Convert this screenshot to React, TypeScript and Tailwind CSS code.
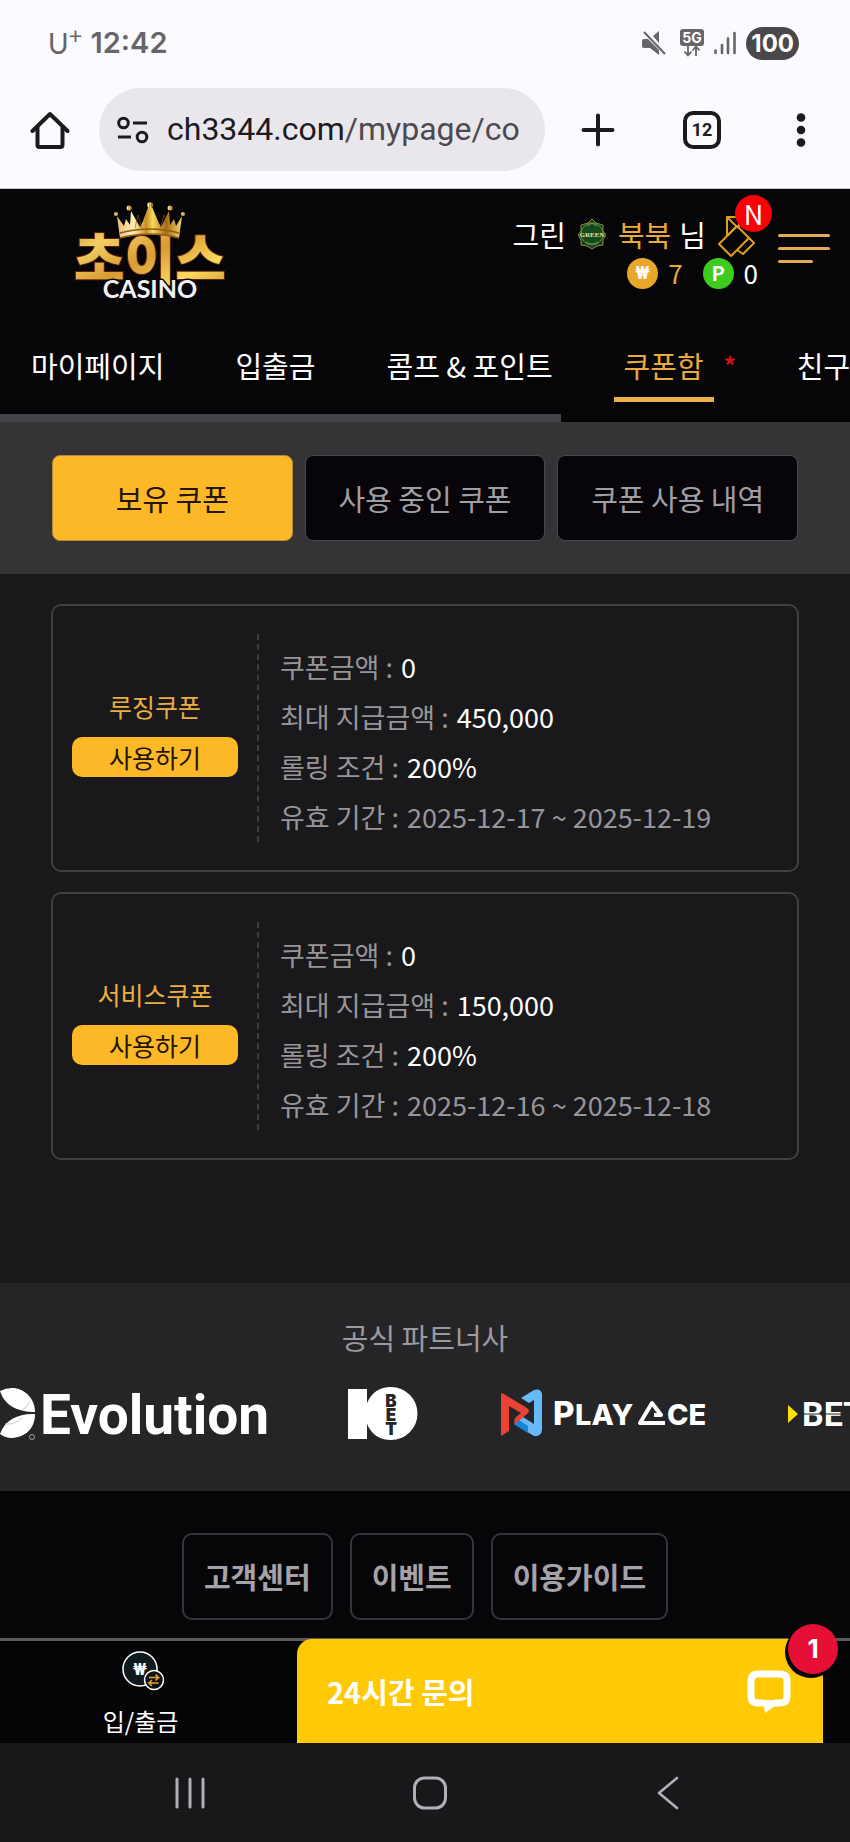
import type { ReactNode } from "react";

type Coupon = {
  name: string;
  amount: string;
  max: string;
  rolling: string;
  period: string;
};

const coupons: Coupon[] = [
  { name: "루징쿠폰", amount: "0", max: "450,000", rolling: "200%", period: "2025-12-17 ~ 2025-12-19" },
  { name: "서비스쿠폰", amount: "0", max: "150,000", rolling: "200%", period: "2025-12-16 ~ 2025-12-18" },
];

const menu = [
  { label: "마이페이지" },
  { label: "입출금" },
  { label: "콤프 & 포인트" },
  { label: "쿠폰함", active: true },
  { label: "친구초대" },
];

const tabs = ["보유 쿠폰", "사용 중인 쿠폰", "쿠폰 사용 내역"];

const footerLinks = ["고객센터", "이벤트", "이용가이드"];

function StatusBar() {
  return (
    <div className="flex h-[86px] items-center justify-between pl-12 pr-[51px] font-['Inter',sans-serif] text-[#676569]">
      <div className="flex items-center gap-2">
        <span className="flex items-start font-['Lato',sans-serif] text-[28px] leading-8">
          U<span className="text-[24px] leading-4">+</span>
        </span>
        <span className="text-[29px] font-semibold leading-8">12:42</span>
      </div>
      <div className="flex items-center gap-2.5">
        <svg className="h-6 w-6" viewBox="0 0 24 24" fill="currentColor">
          <path d="M0 10q0-2 2-2h4l11 11v5l-9-7H2q-2 0-2-2zM11 5l6-5v12z" />
          <path d="M2 1l21 22" stroke="currentColor" strokeWidth="2" />
        </svg>
        <svg className="ml-1 h-7 w-6" viewBox="0 0 24 28">
          <rect width="24" height="17" rx="3" fill="#676569" />
          <text x="12" y="14" textAnchor="middle" fontFamily="Inter" fontSize="14" fontWeight="700" fill="#fff">5G</text>
          <path d="M8 17v9M4.500 22.500l3.500 4 3.500-4M16 27v-9M12.500 21.500l3.500-4 3.500 4" stroke="#676569" strokeWidth="1.800" fill="none" />
        </svg>
        <svg className="h-6 w-[22px]" viewBox="0 0 22 24" stroke="currentColor" strokeWidth="2.600" strokeLinecap="round">
          <path d="M1.500 19.500v2.500M8 14v8M14 7.500v14.500M20.500 2v20" />
        </svg>
        <span className="rounded-full bg-[#4a484b] px-[5px] text-[24px] font-bold leading-[33px] text-white">100</span>
      </div>
    </div>
  );
}

function BrowserToolbar() {
  return (
    <div className="flex items-center gap-[29px] border-b border-[#c9c8cc] pb-[17px] pl-[30px] pr-[34px] pt-0.5 text-[#1c1a1f]">
      <button aria-label="홈">
        <svg className="h-10 w-10" viewBox="0 0 40 40" fill="none" stroke="currentColor" strokeWidth="4" strokeLinejoin="round">
          <path d="M2.500 21L20 4l17.500 17" strokeLinecap="round" />
          <path d="M7.500 17v18q0 2 2 2h21q2 0 2-2V17" />
        </svg>
      </button>
      <button className="flex min-w-0 flex-1 items-center gap-[18px] rounded-full bg-[#e9e7ec] pl-[18px] font-['Roboto',sans-serif] text-[32px] leading-[83px]">
        <svg className="h-8 w-8 shrink-0" viewBox="0 0 32 32" fill="none" stroke="currentColor" strokeWidth="3">
          <circle cx="6.500" cy="9" r="4.800" />
          <path d="M16 9h14M1 23h13" />
          <circle cx="25" cy="23" r="4.800" />
        </svg>
        <span className="overflow-hidden whitespace-nowrap">
          ch3344.com<span className="text-[#4c4a50]">/mypage/co</span>
        </span>
      </button>
      <div className="ml-1 flex items-center gap-[65px]">
        <button aria-label="새 탭">
          <svg className="h-10 w-10" viewBox="0 0 40 40" stroke="currentColor" strokeWidth="4" strokeLinecap="round">
            <path d="M20 5.500v29M5.500 20h29" />
          </svg>
        </button>
        <button className="flex h-[38px] w-[38px] items-center justify-center rounded-[10px] border-4 border-current font-['Roboto',sans-serif] text-[18px] font-bold">
          12
        </button>
        <button aria-label="메뉴">
          <svg className="h-10 w-[30px]" viewBox="0 0 30 40" fill="currentColor">
            <circle cx="15" cy="7.500" r="4.300" />
            <circle cx="15" cy="20" r="4.300" />
            <circle cx="15" cy="32.500" r="4.300" />
          </svg>
        </button>
      </div>
    </div>
  );
}

function SiteLogo() {
  return (
    <svg className="h-[110px] w-[160px]" viewBox="0 0 160 110" role="img" aria-label="초이스 CASINO">
      <defs>
        <linearGradient id="gold" x1="0" y1="0" x2="1" y2="1">
          <stop offset="0" stopColor="#b97f22" />
          <stop offset="0.250" stopColor="#f3cf63" />
          <stop offset="0.500" stopColor="#d99b32" />
          <stop offset="0.750" stopColor="#fbd95e" />
          <stop offset="1" stopColor="#c98b28" />
        </linearGradient>
        <linearGradient id="crown" x1="0" y1="0" x2="1" y2="0">
          <stop offset="0" stopColor="#e9b978" />
          <stop offset="0.250" stopColor="#fff0b0" />
          <stop offset="0.450" stopColor="#c98e1e" />
          <stop offset="0.550" stopColor="#f8d95c" />
          <stop offset="0.750" stopColor="#a86d12" />
          <stop offset="1" stopColor="#f4d56a" />
        </linearGradient>
      </defs>
      <text x="80" y="82" textAnchor="middle" fontFamily="Noto Sans CJK KR" fontSize="55" fontWeight="900" fill="url(#gold)" stroke="#5a2410" strokeWidth="2" paintOrder="stroke">초이스</text>
      <g fill="url(#crown)">
        <path d="M50 41l-3-22 7 10 2-7 4 6 1-14 9 16 3-6 7-19 8 19 3 6 8-16 1 14 4-6 2 7 6-10-3 22q-30-7-59 0z" />
        <circle cx="46" cy="17" r="2" />
        <circle cx="59" cy="11" r="2.500" />
        <circle cx="80" cy="8" r="2.800" />
        <circle cx="100" cy="11" r="2.500" />
        <circle cx="113" cy="17" r="2" />
      </g>
      <path d="M50 36q30-8 59 0M50 41q30-8 59 0" fill="none" stroke="#8e5a1c" strokeWidth="1.500" />
      <path d="M65 31l3-13 4 13M90 31l4-13 4 13" fill="none" stroke="#8e5a1c" strokeWidth="1" opacity="0.600" />
      <text x="80" y="101" textAnchor="middle" fontFamily="Lato" fontSize="25" fontWeight="700" fill="#f2f0f4" stroke="#08060a" strokeWidth="3" paintOrder="stroke">CASINO</text>
    </svg>
  );
}

function GreenEmblem() {
  return (
    <svg className="h-8 w-7" viewBox="0 0 28 32">
      <path d="M14 1l4 4 7 2v6l3 4-3 5v5l-6 1-5 3-5-3-6-1v-5l-3-5 3-4V7l7-2z" fill="#123d18" stroke="#8b8a45" strokeWidth="1" />
      <circle cx="14" cy="16" r="11" fill="#17491f" stroke="#66883f" strokeWidth="1" />
      <path d="M9 8l5-3 5 3M8 24q6 4 12 0" fill="none" stroke="#6d9a52" strokeWidth="1" />
      <text x="14" y="19" textAnchor="middle" fontFamily="Liberation Serif" fontSize="7" fontWeight="700" fill="#e8e4a4">GREEN</text>
    </svg>
  );
}

function Coin({ children, color }: { children: ReactNode; color: "gold" | "green" }) {
  return (
    <span
      className={
        color === "gold"
          ? "flex h-[31px] w-[31px] items-center justify-center rounded-full bg-[#e8a62a] font-['Roboto',sans-serif] text-[18px] font-bold leading-none text-white"
          : "flex h-[31px] w-[31px] items-center justify-center rounded-full bg-[#3ccb1e] text-[20px] font-bold leading-none text-white"
      }
    >
      {children}
    </span>
  );
}

function SiteHeader() {
  return (
    <header className="bg-[#060508]">
      <div className="flex items-start justify-between pl-[70px] pr-5 pt-2">
        <a href="#home">
          <SiteLogo />
        </a>
        <div className="flex items-start gap-[22px]">
          <div className="pt-3.5">
            <div className="flex items-center text-[29px] leading-[44px] text-white">
              <span>그린</span>
              <span className="ml-3">
                <GreenEmblem />
              </span>
              <span className="ml-3 text-[#e9a93c]">북북</span>
              <span className="ml-2">님</span>
              <a href="#coupon" aria-label="쿠폰 알림" className="relative ml-3 mt-1">
                <svg className="h-[42px] w-[38px]" viewBox="0 0 38 42" fill="none" stroke="#dfa01c" strokeWidth="2" strokeLinejoin="round">
                  <path d="M1 29L19 11l12 12-18 18z" />
                  <path d="M19 35l6 4 11-11-6-6" />
                  <path d="M9 21V2h12v10M9 2l11 11M9 21l10-10" />
                </svg>
                <span className="absolute -top-5 left-[17px] flex h-[37px] w-[37px] items-center justify-center rounded-full bg-[#fb0007] text-[27px] leading-none">
                  N
                </span>
              </a>
            </div>
            <div className="-mr-0.5 flex items-center justify-end text-[26px] leading-8 text-white">
              <Coin color="gold">₩</Coin>
              <span className="ml-2.5 text-[#e9a93c]">7</span>
              <span className="ml-5">
                <Coin color="green">P</Coin>
              </span>
              <span className="ml-2.5">0</span>
            </div>
          </div>
          <button aria-label="전체 메뉴" className="mt-[37px] flex flex-col gap-2.5">
            <span className="h-[3px] w-[52px] rounded-full bg-[#e5ac55]" />
            <span className="h-[3px] w-[52px] rounded-full bg-[#e5ac55]" />
            <span className="h-[3px] w-[35px] rounded-full bg-[#e5ac55]" />
          </button>
        </div>
      </div>

      <nav className="overflow-hidden pl-[21px] pt-7">
        <ul className="flex gap-[51px] whitespace-nowrap text-[29px] text-white">
          {menu.map((item) => (
            <li key={item.label} className="flex shrink-0">
              <a
                href="#menu"
                className={
                  item.active
                    ? "border-b-[5px] border-[#eab04a] px-2.5 pb-0.5 leading-[60px] text-[#eba93b]"
                    : "px-2.5 leading-[60px]"
                }
              >
                {item.label}
              </a>
              {item.active && <span className="pl-2.5 text-[24px] font-bold leading-[60px] text-[#d3121a]">*</span>}
            </li>
          ))}
        </ul>
      </nav>
      <div className="pt-3">
        <div className="h-2 w-[66%] bg-[#454347]" />
      </div>
    </header>
  );
}

function CouponTabs() {
  return (
    <div className="grid grid-cols-3 gap-3 bg-[#353336] px-[52px] pb-[33px] pt-[33px]">
      {tabs.map((tab, i) => (
        <button
          key={tab}
          className={
            i === 0
              ? "rounded-lg border border-[#b08a3c] bg-[#fcb826] text-[29px] leading-[84px] text-[#241503]"
              : "rounded-lg border border-[#4a484c] bg-[#08050a] text-[29px] leading-[84px] text-[#a19ea4]"
          }
        >
          {tab}
        </button>
      ))}
    </div>
  );
}

function CouponRow({ label, children }: { label: string; children: ReactNode }) {
  return (
    <div className="flex gap-2 leading-[50px]">
      <dt>{label} :</dt>
      {children}
    </div>
  );
}

function CouponCard({ coupon }: { coupon: Coupon }) {
  return (
    <article className="flex rounded-[10px] border-2 border-[#403f42] py-7">
      <div className="flex w-[206px] flex-col justify-center border-r-2 border-dashed border-[#3d3c3f] px-[19px] pb-[18px]">
        <h3 className="text-center text-[25px] leading-[50px] text-[#eaae42]">{coupon.name}</h3>
        <button className="mt-1.5 rounded-[10px] bg-[#fcb826] text-[25px] leading-10 text-[#241503]">사용하기</button>
      </div>
      <dl className="pl-[21px] pt-2 text-[27px] text-[#98959a]">
        <CouponRow label="쿠폰금액">
          <dd className="text-white">{coupon.amount}</dd>
        </CouponRow>
        <CouponRow label="최대 지급금액">
          <dd className="text-white">{coupon.max}</dd>
        </CouponRow>
        <CouponRow label="롤링 조건">
          <dd className="text-white">{coupon.rolling}</dd>
        </CouponRow>
        <CouponRow label="유효 기간">
          <dd>{coupon.period}</dd>
        </CouponRow>
      </dl>
    </article>
  );
}

function Partners() {
  return (
    <section className="overflow-hidden bg-[#252427] pb-[46px] pt-8">
      <h2 className="text-center text-[29px] leading-[44px] text-[#9c999f]">공식 파트너사</h2>
      <div className="flex pt-6">
        <svg className="h-[62px] w-[270px] shrink-0" viewBox="0 0 270 62">
          <path d="M0 8q6-3 12-3c12 0 23 10 23 24C20 29 5 24 0 8z" fill="#fff" />
          <path d="M0 51q5 4 12 4c13-1 23-9 23-24C20 30 5 36 0 51z" fill="#fff" />
          <path d="M22 27q6-3 8-9M5 41q10 1 17-6" fill="none" stroke="#c9c9cb" strokeWidth="1" />
          <circle cx="32" cy="54" r="2.500" fill="none" stroke="#a09fa2" />
          <text x="40" y="51" fontFamily="Roboto" fontSize="55" fontWeight="700" fill="#fff">Evolution</text>
        </svg>
        <svg className="ml-[78px] h-[62px] w-[70px] shrink-0" viewBox="0 0 70 62">
          <path d="M0 6h19v14q7-16 24-16a26 26 0 010 53q-17 0-24-16v15H0z" fill="#fff" />
          <g fontFamily="Inter" fontSize="17" fontWeight="900" fill="#252427" textAnchor="middle">
            <text x="43" y="24">B</text>
            <text x="43" y="38">E</text>
            <text x="43" y="52">T</text>
          </g>
        </svg>
        <svg className="ml-[82px] h-[62px] w-[208px] shrink-0" viewBox="0 0 208 62">
          <path d="M21 15l13-8q7-2 8 4v36q-1 7-8 6L14 41l9-7 11 7V17l-5 3z" fill="#66b9fb" />
          <path d="M14 41l5-4 9 6v7z" fill="#1685d8" />
          <path d="M1 12q0-3 3-1l23 14q4 3 0 6L15 41q-2-4 1-7l5-4-12-7v25l-8 5z" fill="#ea4335" />
          <g fontFamily="Inter" fontWeight="800" fill="#fff">
            <text x="53" y="42" fontSize="33">P</text>
            <text x="75" y="42" fontSize="29">LAY</text>
            <text x="167" y="42" fontSize="29">CE</text>
          </g>
          <path d="M154 32h7l-9-12-12 20h25" fill="none" stroke="#fff" strokeWidth="4" strokeLinejoin="round" />
        </svg>
        <svg className="ml-20 h-[62px] w-[130px] shrink-0" viewBox="0 0 130 62">
          <path d="M0 22l10 9-10 9z" fill="#ffe000" />
          <text x="14" y="43" fontFamily="Roboto" fontSize="34" fontWeight="700" fill="#fff">BET</text>
          <path d="M12 31h118" stroke="#252427" strokeWidth="1" />
        </svg>
      </div>
    </section>
  );
}

function BottomBar() {
  return (
    <div className="flex border-t-[3px] border-[#5b5a5c] bg-[#050406] pr-[27px]">
      <a href="#cash" className="flex w-[297px] shrink-0 flex-col items-center pr-4 pt-2.5 text-[24px] leading-8 text-white">
        <svg className="ml-1 h-10 w-[42px]" viewBox="0 0 42 40" fill="none" stroke="#fff" strokeWidth="1.500">
          <circle cx="18" cy="18" r="17" fill="#0f1a1e" />
          <text x="18" y="24" textAnchor="middle" fontFamily="Roboto" fontSize="17" fontWeight="700" fill="#fff" stroke="none">₩</text>
          <circle cx="32" cy="29" r="9.500" fill="#0c1114" />
          <path d="M27 26.500h9.500l-3-3M36.500 32h-9.500l3 3M36.500 26.500l-3 3M27 32l3-3" stroke="#eba52e" />
        </svg>
        <span className="pt-3.5">입/출금</span>
      </a>
      <button className="relative -mt-0.5 flex flex-1 items-center justify-between rounded-tl-[15px] bg-[#ffc905] py-[30px] pl-[30px] pr-8 text-[29px] font-bold leading-[44px] text-white">
        <span>24시간 문의</span>
        <svg className="h-11 w-11" viewBox="0 0 44 44" fill="none" stroke="#fff" strokeWidth="7">
          <path d="M17 34h-6q-7 0-7-7V12q0-7 7-7h22q7 0 7 7v15q0 7-7 7h-6" />
          <path d="M16 31h16v6h-4l-10 7z" fill="#fff" stroke="none" />
        </svg>
        <span className="absolute -right-[15px] -top-[15px] flex h-[50px] w-[50px] items-center justify-center rounded-full bg-[#e60f35] font-['Inter',sans-serif] text-[26px] shadow-[-2px_3px_0_1px_#0a0508]">
          1
        </span>
      </button>
    </div>
  );
}

function SystemNav() {
  return (
    <div className="flex justify-between bg-[#19171a] pb-8 pl-[170px] pr-40 pt-[33px] text-[#b3b0b5]">
      <button aria-label="최근 앱">
        <svg className="h-[34px] w-10" viewBox="0 0 40 34" stroke="currentColor" strokeWidth="3" strokeLinecap="round">
          <path d="M7 3v28M20 3v28M33 3v28" />
        </svg>
      </button>
      <button aria-label="홈 화면">
        <svg className="h-[34px] w-9" viewBox="0 0 36 34" fill="none" stroke="currentColor" strokeWidth="3">
          <rect x="2.500" y="2" width="31" height="30" rx="10" />
        </svg>
      </button>
      <button aria-label="뒤로">
        <svg className="h-[34px] w-10" viewBox="0 0 40 34" fill="none" stroke="currentColor" strokeWidth="2.600" strokeLinecap="round" strokeLinejoin="round">
          <path d="M27 2L9 17l18 15" />
        </svg>
      </button>
    </div>
  );
}

export default function App() {
  return (
    <div className="overflow-hidden bg-[#060508] font-['Noto_Sans_CJK_KR',sans-serif]">
      <div className="bg-[#fbfafe]">
        <StatusBar />
        <BrowserToolbar />
      </div>
      <SiteHeader />
      <CouponTabs />

      <main className="flex flex-col gap-5 bg-[#19181b] px-[51px] pb-[123px] pt-[30px]">
        {coupons.map((coupon) => (
          <CouponCard key={coupon.name} coupon={coupon} />
        ))}
      </main>

      <Partners />

      <footer className="flex justify-center gap-[17px] pb-[18px] pt-[42px]">
        {footerLinks.map((link) => (
          <a key={link} href="#footer" className="rounded-[10px] border-2 border-[#363438] px-5 text-[29px] font-bold leading-[83px] text-[#a5a2a8]">
            {link}
          </a>
        ))}
      </footer>

      <BottomBar />
      <SystemNav />
    </div>
  );
}
